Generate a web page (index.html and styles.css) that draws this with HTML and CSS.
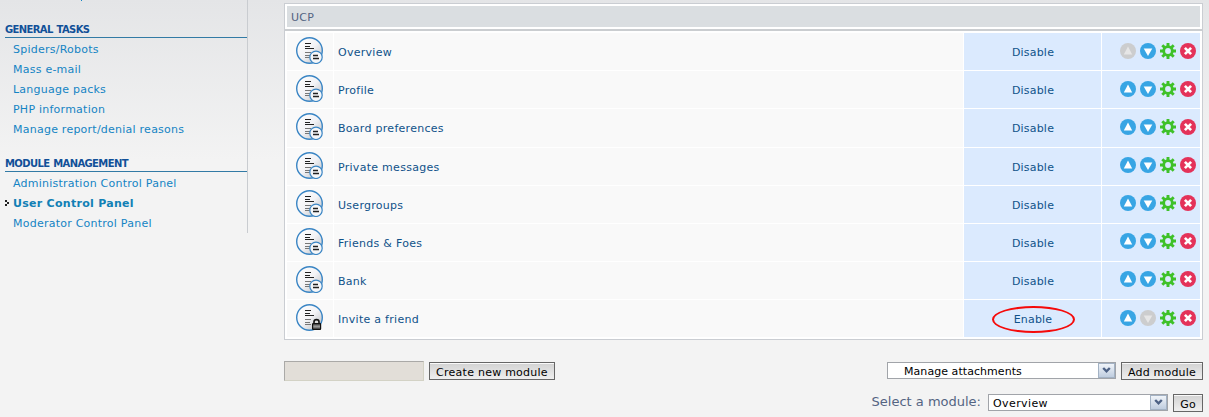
FILE: index.html
```
<!DOCTYPE html>
<html lang="en">
<head>
<meta charset="utf-8">
<title>Module management</title>
<link rel="stylesheet" href="styles.css">
</head>
<body>
<svg class="sprite" width="0" height="0">
  <defs>
    <linearGradient id="disc" x1="0" y1="0" x2="1" y2="1"><stop offset="0" stop-color="#fff"/><stop offset=".5" stop-color="#f3f3f6"/><stop offset="1" stop-color="#b4b7bc"/></linearGradient>
    <linearGradient id="lockfill" x1="0" y1="0" x2="0" y2="1"><stop offset="0" stop-color="#444"/><stop offset=".5" stop-color="#999"/><stop offset="1" stop-color="#444"/></linearGradient>
    <symbol id="page" viewBox="0 0 27 27">
      <circle cx="13.5" cy="13.5" r="12.8" fill="url(#disc)" stroke="#3a85c4" stroke-width="1.4"/>
      <path d="M9 6.500h6M9 9.500h5M9 11.500h9" stroke="#222" stroke-width="1.200"/>
      <path d="M9 15.500h6M9 18.500h5M9 20.500h6" stroke="#777" stroke-width="1.100"/>
    </symbol>
    <symbol id="module" viewBox="0 0 27 27">
      <use href="#page"/>
      <circle cx="20" cy="20.300" r="6.200" fill="#f5f6f8" stroke="#3a85c4" stroke-width="1.200"/>
      <path d="M17 18.500h5M17 21.500h6" stroke="#222" stroke-width="1.300"/>
    </symbol>
    <symbol id="locked" viewBox="0 0 27 27">
      <use href="#page"/>
      <path d="M18 20v-2.200q0-2.200 2.500-2.200t2.500 2.200V20" fill="#ddd" stroke="#111" stroke-width="1.600"/>
      <rect x="16.600" y="19.600" width="8" height="5.800" rx=".6" fill="url(#lockfill)" stroke="#111" stroke-width="1.200"/>
    </symbol>
    <symbol id="up" viewBox="0 0 16 16"><circle cx="8" cy="8" r="8" fill="#38a5e4"/><path d="M8 3.600L12.200 11.500H3.800z" fill="#fff"/></symbol>
    <symbol id="down" viewBox="0 0 16 16"><circle cx="8" cy="8" r="8" fill="#38a5e4"/><path d="M8 13L12.300 5.500H3.700z" fill="#fff"/></symbol>
    <symbol id="up-off" viewBox="0 0 16 16"><circle cx="8" cy="8" r="8" fill="#cccdce"/><path d="M8 3.600L12.200 11.500H3.800z" fill="#e6e6e6"/></symbol>
    <symbol id="down-off" viewBox="0 0 16 16"><circle cx="8" cy="8" r="8" fill="#cccdce"/><path d="M8 13L12.300 5.500H3.700z" fill="#e6e6e6"/></symbol>
    <symbol id="gear" viewBox="0 0 16 16">
      <path d="M8 0v3.500M8 12.500V16M0 8h3.500M12.500 8H16M2.300 2.300l2.500 2.500M11.200 11.200l2.500 2.500M13.700 2.300l-2.500 2.500M4.800 11.200l-2.500 2.500" stroke="#3fc128" stroke-width="2.900"/>
      <circle cx="8" cy="8" r="4.300" fill="none" stroke="#3fc128" stroke-width="2.800"/>
    </symbol>
    <symbol id="delete" viewBox="0 0 16 16"><circle cx="8" cy="8" r="8" fill="#e43259"/><path d="M4.900 4.900l6.200 6.200M11.100 4.900l-6.200 6.200" stroke="#fff" stroke-width="2.700"/></symbol>
  </defs>
</svg>
<div class="layout">
  <nav class="sidebar">
    <h2>GENERAL TASKS</h2>
    <ul>
      <li>Spiders/Robots</li>
      <li>Mass e-mail</li>
      <li>Language packs</li>
      <li>PHP information</li>
      <li>Manage report/denial reasons</li>
    </ul>
    <h2 class="second">MODULE MANAGEMENT</h2>
    <ul>
      <li>Administration Control Panel</li>
      <li class="active"><svg class="marker" width="4" height="6" viewBox="0 0 4 6" shape-rendering="crispEdges"><path d="M0 0h2v2H0zM2 2h2v2H2zM0 4h2v2H0z" fill="#222"/></svg>User Control Panel</li>
      <li>Moderator Control Panel</li>
    </ul>
  </nav>
  <main class="content">
    <section class="modules">
      <header><div>UCP</div></header>
      <div class="rows">
        <div class="row"><div class="icon"><svg><use href="#module"/></svg></div><div class="name">Overview</div><div class="state">Disable</div><div class="actions"><svg><use href="#up-off"/></svg><svg><use href="#down"/></svg><svg><use href="#gear"/></svg><svg><use href="#delete"/></svg></div></div>
        <div class="row"><div class="icon"><svg><use href="#module"/></svg></div><div class="name">Profile</div><div class="state">Disable</div><div class="actions"><svg><use href="#up"/></svg><svg><use href="#down"/></svg><svg><use href="#gear"/></svg><svg><use href="#delete"/></svg></div></div>
        <div class="row tall"><div class="icon"><svg><use href="#module"/></svg></div><div class="name">Board preferences</div><div class="state">Disable</div><div class="actions"><svg><use href="#up"/></svg><svg><use href="#down"/></svg><svg><use href="#gear"/></svg><svg><use href="#delete"/></svg></div></div>
        <div class="row raised"><div class="icon"><svg><use href="#module"/></svg></div><div class="name">Private messages</div><div class="state">Disable</div><div class="actions"><svg><use href="#up"/></svg><svg><use href="#down"/></svg><svg><use href="#gear"/></svg><svg><use href="#delete"/></svg></div></div>
        <div class="row raised"><div class="icon"><svg><use href="#module"/></svg></div><div class="name">Usergroups</div><div class="state">Disable</div><div class="actions"><svg><use href="#up"/></svg><svg><use href="#down"/></svg><svg><use href="#gear"/></svg><svg><use href="#delete"/></svg></div></div>
        <div class="row raised"><div class="icon"><svg><use href="#module"/></svg></div><div class="name">Friends &amp; Foes</div><div class="state">Disable</div><div class="actions"><svg><use href="#up"/></svg><svg><use href="#down"/></svg><svg><use href="#gear"/></svg><svg><use href="#delete"/></svg></div></div>
        <div class="row raised"><div class="icon"><svg><use href="#module"/></svg></div><div class="name">Bank</div><div class="state">Disable</div><div class="actions"><svg><use href="#up"/></svg><svg><use href="#down"/></svg><svg><use href="#gear"/></svg><svg><use href="#delete"/></svg></div></div>
        <div class="row"><div class="icon"><svg><use href="#locked"/></svg></div><div class="name">Invite a friend</div><div class="state">Enable<span class="ring"></span></div><div class="actions"><svg><use href="#up"/></svg><svg><use href="#down-off"/></svg><svg><use href="#gear"/></svg><svg><use href="#delete"/></svg></div></div>
      </div>
    </section>
    <div class="bar">
      <div class="field"></div>
      <div class="button create">Create new module</div>
      <div class="select attach"><span>Manage attachments</span><i><svg viewBox="0 0 9 7"><path d="M1.200 1L4.500 4.300 7.800 1" fill="none" stroke="#4d6185" stroke-width="2.400"/></svg></i></div>
      <div class="button add">Add module</div>
    </div>
    <div class="bar pick">
      <label>Select a module:</label>
      <div class="select overview"><span>Overview</span><i><svg viewBox="0 0 9 7"><path d="M1.200 1L4.500 4.300 7.800 1" fill="none" stroke="#4d6185" stroke-width="2.400"/></svg></i></div>
      <div class="button go">Go</div>
    </div>
  </main>
</div>
</body>
</html>
```
FILE: styles.css
```
* { box-sizing: border-box; }
body {
  margin: 0;
  height: 417px;
  overflow: hidden;
  background: linear-gradient(#e4e5e7 0, #f3f3f3 160px) #f3f3f3;
  font: 11px/20px "DejaVu Sans", Verdana, sans-serif;
}
.sprite { position: absolute; }
.layout { display: flex; height: 417px; }

.sidebar {
  position: relative;
  width: 248px;
  height: 233px;
  padding: 22px 0 0 5px;
  border-right: 1px solid #c9ccd0;
}
/* tail of the menu entry scrolled off the top */
.sidebar::before {
  content: "";
  position: absolute;
  left: 81px;
  top: 0;
  width: 1px;
  height: 1px;
  background: #1484c4;
}
.sidebar h2 {
  margin: 0;
  height: 16px;
  border-bottom: 1px solid #327aa5;
  color: #115098;
  font: bold 10px/15px "DejaVu Sans", Verdana, sans-serif;
  letter-spacing: -0.62px;
  word-spacing: 1px;
}
.sidebar h2.second { margin-top: 16px; }
.sidebar ul { margin: 0; padding: 2px 0 0 8px; list-style: none; }
.sidebar li { height: 20px; color: #1484c4; white-space: nowrap; letter-spacing: 0.24px; }
.sidebar li.active { position: relative; font-weight: bold; color: #1180b5; letter-spacing: 0.28px; }
.marker { position: absolute; left: -8px; top: 6px; }

.content { margin-left: 36px; width: 919px; padding-top: 3px; }
.modules { height: 337px; border: 1px solid #cacdd2; background: #fff; }
.modules header { height: 27px; padding: 2px; border-bottom: 2px solid #cacdd0; }
.modules header div {
  height: 21px;
  padding-left: 4px;
  background: #dadee1;
  color: #536482;
  line-height: 23px;
  letter-spacing: 0.3px;
}
.rows { display: flex; flex-direction: column; gap: 1px; padding: 2px; }
.row {
  display: grid;
  grid-template-columns: 46px 629px 137px 98px;
  grid-template-rows: 37px;
  gap: 1px;
  color: #105289;
  line-height: 39px;
}
.row.tall { grid-template-rows: 38px; }
.icon, .name { background: #f9f9f9; }
.icon { padding: 4px 0 0 9px; }
.icon svg { display: block; width: 27px; height: 27px; }
.name { padding-left: 4px; letter-spacing: 0.28px; }
.state, .actions { background: #dbeafe; }
.state { position: relative; padding-left: 1px; text-align: center; letter-spacing: 0.2px; }
.ring {
  position: absolute;
  left: 28px;
  top: 6px;
  width: 83px;
  height: 27px;
  border: 2px solid #f50a0a;
  border-radius: 50%;
}
.actions { display: flex; gap: 4px; padding: 10px 0 0 18px; }
.raised .actions { padding-top: 9px; }
.actions svg { width: 16px; height: 16px; }

.bar { display: flex; align-items: flex-start; margin-top: 21px; height: 20px; }
.field { width: 140px; height: 20px; background: #e2ded8; border: 1px solid; border-color: #aaa9a7 #d3d2c5 #d3d2c5 #aaa9a7; }
.button {
  height: 18px;
  margin: 1px 0 0 5px;
  border: 1px solid #666;
  background: linear-gradient(#d2d2d2, #efefef);
  box-shadow: inset 0 1px #fafafa;
  color: #000;
  line-height: 19px;
  text-align: center;
  white-space: nowrap;
}
.create { width: 126px; letter-spacing: 0.25px; }
.add { width: 82px; letter-spacing: 0.2px; }
.go { width: 30px; }
.select {
  display: flex;
  justify-content: space-between;
  height: 17px;
  margin-top: 1px;
  border: 1px solid #a1a4a9;
  background: #fff;
  color: #000;
  line-height: 17px;
}
.attach { width: 229px; margin-left: 332px; padding-left: 16px; letter-spacing: 0.06px; }
.overview { width: 180px; padding-left: 4px; margin-left: 7px; letter-spacing: 0.4px; }
.select i {
  width: 17px;
  height: 15px;
  display: grid;
  place-items: center;
  border: 1px solid #a3b2c4;
  background: linear-gradient(#f0f4f9, #bfcddf);
}
.select i svg { width: 9px; height: 7px; }
.pick { margin-top: 12px; justify-content: flex-end; }
.pick label { color: #536482; font-size: 13px; line-height: 18px; white-space: nowrap; }
```
